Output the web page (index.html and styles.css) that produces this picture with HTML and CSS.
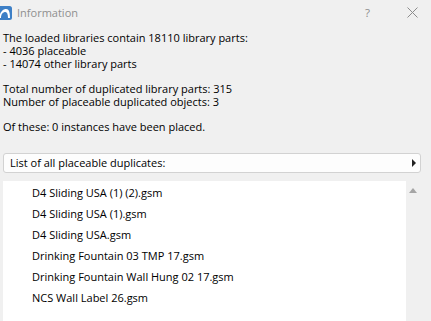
FILE: index.html
```html
<!DOCTYPE html>
<html lang="en">
<head>
    <meta charset="UTF-8">
    <meta name="viewport" content="width=device-width, initial-scale=1.0">
    <title>Information</title>
    <link rel="stylesheet" href="styles.css">
</head>
<body>
    <div class="dialog">
        <div class="titlebar">
            <svg class="app-icon" width="14" height="14" viewBox="0 0 14 14">
                <rect x="0" y="0" width="14" height="14" rx="2.5" fill="#3d7fc6"/>
                <path d="M1 12 C2 5 6 3 8 3 C11 3 12 6 12 12 L10 12 C10 8 9 6 7.5 6 C5 6 3 8 3 12 Z" fill="#ffffff"/>
            </svg>
            <span class="title">Information</span>
            <span class="title-btn help">?</span>
            <span class="title-btn close">
                <svg width="11" height="11" viewBox="0 0 11 11">
                    <path d="M0.5 0.5 L10.5 10.5 M10.5 0.5 L0.5 10.5" stroke="#8c8c8c" stroke-width="1" fill="none"/>
                </svg>
            </span>
        </div>

        <div class="content">
            <p class="info">The loaded libraries contain 18110 library parts:<br>- 4036 placeable<br>- 14074 other library parts</p>
            <p class="info">Total number of duplicated library parts: 315<br>Number of placeable duplicated objects: 3</p>
            <p class="info">Of these: 0 instances have been placed.</p>

            <div class="list-btn">
                <span>List of all placeable duplicates:</span>
                <span class="arrow"></span>
            </div>

            <div class="list-wrap">
                <ul class="list">
                    <li>D4 Sliding USA (1) (2).gsm</li>
                    <li>D4 Sliding USA (1).gsm</li>
                    <li>D4 Sliding USA.gsm</li>
                    <li>Drinking Fountain 03 TMP 17.gsm</li>
                    <li>Drinking Fountain Wall Hung 02 17.gsm</li>
                    <li>NCS Wall Label 26.gsm</li>
                </ul>
                <div class="scrollbar">
                    <span class="scroll-up"></span>
                </div>
            </div>
        </div>
    </div>
</body>
</html>
```

FILE: styles.css
```css
body, html {
    margin: 0;
    padding: 0;
    background-color: #f0f0f0;
    font-family: "Open Sans", "Noto Sans", sans-serif;
    color: #000;
    overflow: hidden;
}

.dialog {
    width: 431px;
    height: 321px;
    overflow: hidden;
}

.titlebar {
    height: 25px;
    display: flex;
    align-items: center;
}

.app-icon {
    margin-left: -2px;
    margin-top: 1px;
}

.title {
    margin-left: 5px;
    font-size: 11px;
    color: #8f8f8f;
    flex: 1;
}

.title-btn {
    color: #8c8c8c;
    font-size: 11.5px;
}

.help {
    margin-right: 37px;
}

.close {
    display: flex;
    margin-right: 13px;
}

.content {
    padding: 7.4px 0 0 3px;
}

.info {
    margin: 0 0 12.7px;
    font-size: 11px;
    line-height: 12.7px;
}

.list-btn {
    margin: 18.7px 10px 0 0;
    height: 18px;
    border: 1px solid #d2d2d2;
    border-radius: 3px;
    background-color: #fdfdfd;
    display: flex;
    align-items: center;
    justify-content: space-between;
    padding: 0 4px 0 6px;
    font-size: 11px;
}

.arrow {
    width: 0;
    height: 0;
    border-top: 4px solid transparent;
    border-bottom: 4px solid transparent;
    border-left: 4px solid #222;
}

.list-wrap {
    display: flex;
    margin-top: 8px;
    height: 140px;
}

.list {
    list-style: none;
    margin: 0;
    padding: 1.2px 0 0 29px;
    width: 374px;
    background-color: #fff;
    font-size: 11px;
}

.list li {
    height: 21px;
    line-height: 21px;
}

.scrollbar {
    flex: 1;
    position: relative;
}

.scroll-up {
    position: absolute;
    left: 3px;
    top: 7px;
    width: 0;
    height: 0;
    border-left: 4px solid transparent;
    border-right: 4px solid transparent;
    border-bottom: 5px solid #a5a5a5;
}
```
